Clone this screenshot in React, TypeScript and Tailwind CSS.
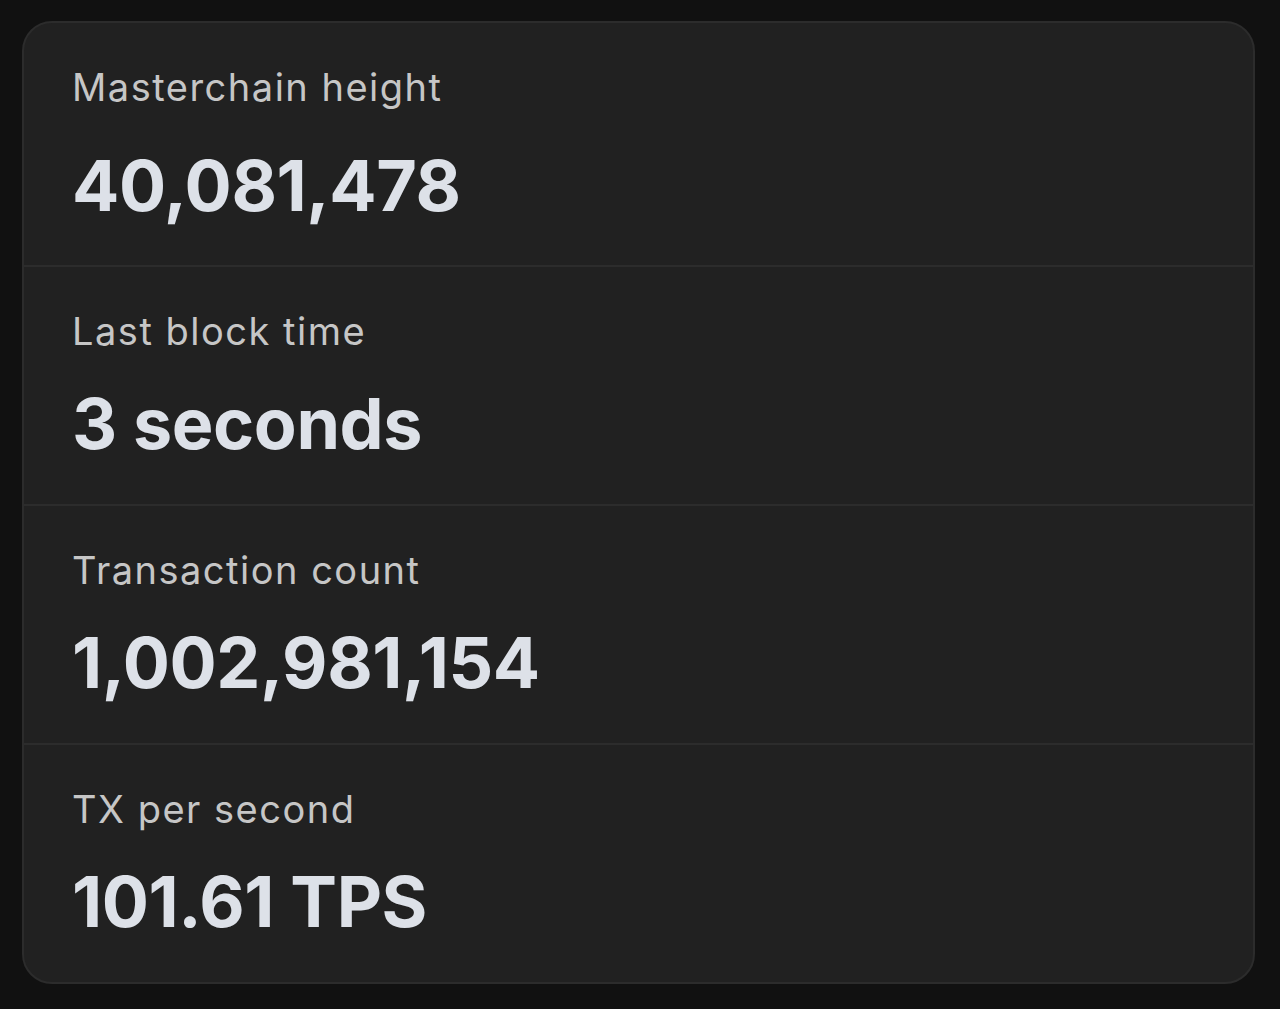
const stats = [
  { label: "Masterchain height", value: "40,081,478" },
  { label: "Last block time", value: "3 seconds" },
  { label: "Transaction count", value: "1,002,981,154" },
  { label: "TX per second", value: "101.61 TPS" },
];

export default function App() {
  return (
    <div
      className="min-h-screen bg-[#111111] pt-[21px] pl-[22px] pr-[25px] pb-[25px]"
      style={{ fontFamily: "Inter, 'Noto Sans', sans-serif" }}
    >
      <div className="rounded-[30px] border-2 border-[#2c2c2c] bg-[#212121] overflow-hidden">
        {stats.map((s, i) => (
          <div
            key={s.label}
            className={`px-[48px] pt-[42px] ${i > 0 ? "h-[239px] border-t-2 border-[#2c2c2c]" : "h-[242px]"}`}
          >
            <p className="text-[38px] leading-[44px] text-[#c6c6c6] tracking-[1.5px]">{s.label}</p>
            <p
              className={`text-[70px] leading-[80px] font-bold text-[#dde1e8] tracking-[-0.4px] ${i > 0 ? "mt-[31px]" : "mt-[37px]"}`}
            >
              {s.value}
            </p>
          </div>
        ))}
      </div>
    </div>
  );
}
